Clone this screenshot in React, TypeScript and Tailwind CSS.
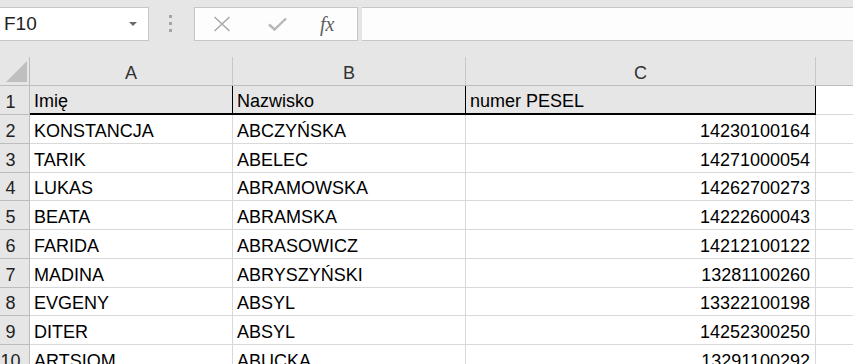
import React from 'react';

const rows = [
  ['Imię', 'Nazwisko', 'numer PESEL'],
  ['KONSTANCJA', 'ABCZYŃSKA', '14230100164'],
  ['TARIK', 'ABELEC', '14271000054'],
  ['LUKAS', 'ABRAMOWSKA', '14262700273'],
  ['BEATA', 'ABRAMSKA', '14222600043'],
  ['FARIDA', 'ABRASOWICZ', '14212100122'],
  ['MADINA', 'ABRYSZYŃSKI', '13281100260'],
  ['EVGENY', 'ABSYL', '13322100198'],
  ['DITER', 'ABSYL', '14252300250'],
  ['ARTSIOM', 'ABUCKA', '13291100292'],
];

// row heights incl. bottom grid line
const heights = ['h-[29px]', 'h-[29px]', 'h-[29px]', 'h-[28px]', 'h-[29px]', 'h-[29px]', 'h-[29px]', 'h-[28px]', 'h-[29px]', 'h-[29px]'];

const cols = 'grid grid-cols-[30px_203px_233px_350px_1fr]';
const cell = 'flex items-end pb-[3px] leading-[18px] text-[18px] overflow-hidden whitespace-nowrap';

function FormulaBar() {
  return (
    <div className="h-[57px] bg-[#e6e6e6] flex pt-[7px]">
      <div className="w-[149px] h-[34px] bg-white border border-l-0 border-[#c6c6c6] flex items-center justify-between pl-[4px] pr-[11px]">
        <span className="text-[19px] text-[#222]">F10</span>
        <span className="w-0 h-0 border-l-[4px] border-r-[4px] border-t-[4px] border-l-transparent border-r-transparent border-t-[#6b6b6b]" />
      </div>
      <div className="w-[45px] flex flex-col items-center pt-[8px] gap-[4px] pr-[3px]">
        <span className="w-[3px] h-[3px] bg-[#a5a5a5]" />
        <span className="w-[3px] h-[3px] bg-[#a5a5a5]" />
        <span className="w-[3px] h-[3px] bg-[#a5a5a5]" />
      </div>
      <div className="w-[164px] h-[34px] bg-[#fdfdfd] border border-[#c6c6c6] flex items-center">
        <svg width="18" height="16" viewBox="0 0 18 16" className="ml-[18px]">
          <path d="M1.5 1 L16.5 15 M16.5 1 L1.5 15" stroke="#a6a6a6" strokeWidth="1.4" fill="none" />
        </svg>
        <svg width="19" height="14" viewBox="0 0 19 14" className="ml-[37px]">
          <path d="M1 7.5 L6.5 12.5 L18 1.5" stroke="#b6b6b6" strokeWidth="2.4" fill="none" />
        </svg>
        <span className="ml-[33px] text-[20px] italic text-[#5e5e5e] leading-none" style={{ fontFamily: '"Liberation Serif", serif' }}>
          fx
        </span>
      </div>
      <div className="flex-1 ml-[4px] h-[34px] bg-[#fdfdfd] border-y border-[#c6c6c6]" />
    </div>
  );
}

export default function App() {
  return (
    <div className="w-[853px] h-[364px] overflow-hidden bg-white" style={{ fontFamily: '"Liberation Sans", Arial, sans-serif' }}>
      <FormulaBar />

      {/* column headers */}
      <div className={`${cols} h-[29px] bg-[#e6e6e6] border-b border-[#bdbdbd] text-[#333]`}>
        <div className="relative border-r border-[#bdbdbd]">
          <svg width="21" height="21" viewBox="0 0 21 21" className="absolute left-[6px] top-[4px]">
            <path d="M21 0 L21 21 L0 21 Z" fill="#bfbfbf" />
          </svg>
        </div>
        {['A', 'B', 'C', ''].map((c, i) => (
          <div key={i} className={`${cell} justify-center ${i < 3 ? 'border-r border-[#c8c8c8]' : ''}`}>
            {c}
          </div>
        ))}
      </div>

      {rows.map((r, i) => {
        const first = i === 0;
        return (
          <div key={i} className={`${cols} ${heights[i]} text-black`}>
            <div className={`${cell} justify-center pr-[8px] bg-[#e6e6e6] border-r border-b border-[#bdbdbd] text-[#222]`}>
              {i + 1}
            </div>
            {r.map((v, j) => (
              <div
                key={j}
                className={`${cell} ${j === 2 && !first ? 'justify-end pr-[5px]' : 'pl-[4px]'} ${
                  first ? 'bg-[#e6e6e6] border-r border-b-2 border-black' : 'border-r border-b border-[#d9d9d9]'
                }`}
              >
                {v}
              </div>
            ))}
            <div className="border-b border-[#d9d9d9]" />
          </div>
        );
      })}
    </div>
  );
}
